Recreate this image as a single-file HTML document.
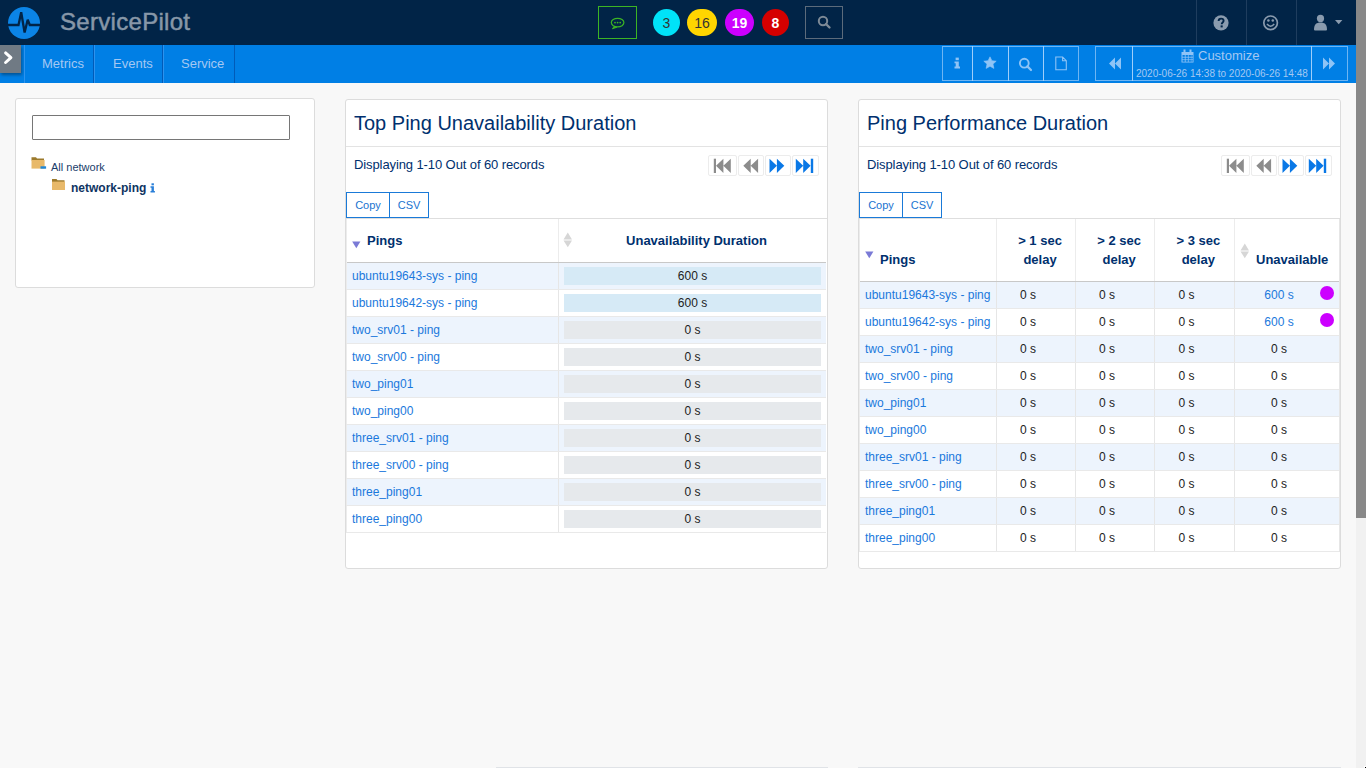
<!DOCTYPE html>
<html><head><meta charset="utf-8">
<style>
*{box-sizing:border-box;margin:0;padding:0}
html,body{width:1366px;height:768px;overflow:hidden;background:#f8f8f8;font-family:"Liberation Sans",sans-serif}
.abs{position:absolute}
#hdr{position:absolute;left:0;top:0;width:1356px;height:45px;background:#012447}
#nav{position:absolute;left:0;top:45px;width:1356px;height:38px;background:#007fe5}
#sb{position:absolute;left:1356px;top:0;width:10px;height:768px;background:#f1f1f1}
#sbt{position:absolute;left:1356px;top:0;width:10px;height:518px;background:#888}
.logo{left:60px;top:8px;font-size:24px;line-height:27px;color:#8797a8;letter-spacing:0.3px;-webkit-text-stroke:0.5px #8797a8}
.navsep{position:absolute;top:45px;width:1px;height:38px;background:#005bb8}
.navtxt{position:absolute;top:56px;font-size:13px;color:#a4c8f2}
.hsep{position:absolute;top:0;width:1px;height:45px;background:#1f3d5e}
.badge{top:9px;height:27px;border-radius:14px;text-align:center;font-size:14px;line-height:29px}
.nb{top:46px;height:35px;border:1px solid rgba(200,225,255,.55)}
.ptitle{top:112px;font-size:20px;line-height:23px;color:#00306e}
.pdisp{top:157px;letter-spacing:-0.1px;font-size:13px;line-height:15px;color:#00306e}
.pgb{top:155px;height:21px;border:1px solid #ececec;border-radius:2px}
.cpb{top:192px;height:26px;border:1px solid #1a7ad8;font-size:11px;line-height:24px;text-align:center;color:#1a73d0}
.th{font-size:13px;font-weight:bold;color:#00306e;line-height:16px}
.td{font-size:12px;line-height:26px;white-space:nowrap}
.lk{color:#1a78dc}
.panel{position:absolute;background:#fff;border:1px solid #dcdcdc;border-radius:3px}
</style></head><body>
<div id="hdr"></div>
<div id="nav"></div>
<div id="sb"></div><div id="sbt"></div>

<!-- logo -->
<svg class="abs" style="left:8px;top:7px" width="32" height="32" viewBox="0 0 32 32">
<circle cx="16" cy="16" r="16" fill="#0b84e6"/>
<polyline points="0,18 10.5,18 13.2,5.2 16.6,25.5 19.7,12.8 21.8,18 32,18" fill="none" stroke="#012447" stroke-width="2.3" stroke-linejoin="miter" stroke-miterlimit="3"/>
</svg>
<div class="abs logo">ServicePilot</div>

<!-- center header -->
<div class="abs" style="left:598px;top:6px;width:39px;height:33px;border:1px solid #3cb424"></div>
<svg class="abs" style="left:609px;top:16px" width="18" height="15" viewBox="0 0 18 15">
<ellipse cx="8.6" cy="6.6" rx="6.3" ry="4.3" fill="none" stroke="#3cb424" stroke-width="1.2"/>
<path d="M5.2 10.4 L3.4 12.8 L8 11.2" fill="#3cb424" stroke="#3cb424" stroke-width="0.9"/>
<circle cx="6" cy="6.6" r="0.9" fill="#3cb424"/><circle cx="8.6" cy="6.6" r="0.9" fill="#3cb424"/><circle cx="11.2" cy="6.6" r="0.9" fill="#3cb424"/>
</svg>
<div class="abs badge" style="left:653px;width:27px;background:#00e3f8;color:#333">3</div>
<div class="abs badge" style="left:687px;width:30px;background:#ffd500;color:#333">16</div>
<div class="abs badge" style="left:725px;width:29px;background:#cc00ff;color:#fff;font-weight:bold">19</div>
<div class="abs badge" style="left:762px;width:27px;background:#d50000;color:#fff;font-weight:bold">8</div>
<div class="abs" style="left:805px;top:6px;width:38px;height:33px;border:1px solid #5c6b7b"></div>
<svg class="abs" style="left:817px;top:15px" width="15" height="15" viewBox="0 0 15 15">
<circle cx="6" cy="6" r="4.2" fill="none" stroke="#7d8a97" stroke-width="2"/>
<line x1="9" y1="9" x2="12.5" y2="12.5" stroke="#7d8a97" stroke-width="2.4" stroke-linecap="round"/>
</svg>

<div class="hsep" style="left:1196px"></div>
<div class="hsep" style="left:1246px"></div>
<div class="hsep" style="left:1296px"></div>

<!-- right header icons -->
<svg class="abs" style="left:1213px;top:15px" width="16" height="16" viewBox="0 0 16 16">
<circle cx="8" cy="7.8" r="7.6" fill="#8a9bae"/>
<path d="M5.6 6.1 C5.6 4.4 6.8 3.6 8.1 3.6 C9.5 3.6 10.6 4.5 10.6 5.8 C10.6 7.5 8.7 7.6 8.7 9.2" fill="none" stroke="#012447" stroke-width="1.9"/>
<rect x="7.6" y="10.4" width="2.1" height="2" fill="#012447"/>
</svg>
<svg class="abs" style="left:1262px;top:15px" width="17" height="16" viewBox="0 0 17 16">
<circle cx="8.6" cy="7.8" r="6.8" fill="none" stroke="#8a9bae" stroke-width="1.7"/>
<circle cx="6.4" cy="5.5" r="1.25" fill="#8a9bae"/><circle cx="10.8" cy="5.5" r="1.25" fill="#8a9bae"/>
<path d="M5 9 Q8.6 13.4 12.2 9" fill="none" stroke="#8a9bae" stroke-width="1.6"/>
</svg>
<svg class="abs" style="left:1313px;top:14px" width="16" height="18" viewBox="0 0 16 18">
<circle cx="7.5" cy="4.4" r="3.6" fill="#8a9bae"/>
<path d="M1 15.5 C1 10.5 3.5 8.6 7.5 8.6 C11.5 8.6 14 10.5 14 15.5 Q14 16.6 13 16.6 L2 16.6 Q1 16.6 1 15.5Z" fill="#8a9bae"/>
</svg>
<svg class="abs" style="left:1335px;top:20px" width="8" height="5" viewBox="0 0 8 5"><path d="M0 0 L7.4 0 L3.7 4.2Z" fill="#8a9bae"/></svg>

<!-- nav -->
<div class="abs" style="left:0;top:45px;width:21px;height:28px;background:#707a84;box-shadow:1px 2px 3px rgba(0,0,0,.35)"></div>
<div class="navsep" style="left:24px;background:#2d93ee"></div>
<div class="navsep" style="left:93px"></div><div class="navsep" style="left:94px;background:#2d93ee"></div>
<div class="navsep" style="left:162px"></div><div class="navsep" style="left:163px;background:#2d93ee"></div>
<div class="navsep" style="left:234px"></div>
<div class="navtxt" style="left:42px">Metrics</div>
<div class="navtxt" style="left:113px">Events</div>
<div class="navtxt" style="left:181px">Service</div>

<svg class="abs" style="left:2px;top:50px" width="14" height="16" viewBox="0 0 14 16"><path d="M3.6 2.9 L8.9 7.7 L3.6 12.5" fill="none" stroke="#fff" stroke-width="3" stroke-linecap="round" stroke-linejoin="round"/></svg>
<!-- nav right group 1 -->
<div class="abs nb" style="left:942px;width:31px"></div>
<div class="abs nb" style="left:972px;width:37px"></div>
<div class="abs nb" style="left:1008px;width:36px"></div>
<div class="abs nb" style="left:1043px;width:36px"></div>
<svg class="abs" style="left:954px;top:57px" width="7" height="12" viewBox="0 0 7 12">
<rect x="1.6" y="0.6" width="3.2" height="2.6" fill="#8fc4f6"/>
<path d="M0.5 4.4 L4.8 4.4 L4.8 9.6 L6 9.6 L6 11.4 L0.5 11.4 L0.5 9.6 L1.7 9.6 L1.7 6.2 L0.5 6.2Z" fill="#8fc4f6"/>
</svg>
<svg class="abs" style="left:983px;top:56px" width="14" height="14" viewBox="0 0 14 14">
<path d="M7 0.8 L8.9 4.7 L13.2 5.2 L10 8.1 L10.9 12.4 L7 10.3 L3.1 12.4 L4 8.1 L0.8 5.2 L5.1 4.7Z" fill="#8fc4f6" stroke="#8fc4f6" stroke-width="0.6" stroke-linejoin="round"/>
</svg>
<svg class="abs" style="left:1018px;top:57px" width="15" height="15" viewBox="0 0 15 15">
<circle cx="6.3" cy="6.2" r="4.4" fill="none" stroke="#8fc4f6" stroke-width="1.9"/>
<line x1="9.4" y1="9.4" x2="13" y2="13" stroke="#8fc4f6" stroke-width="2.2" stroke-linecap="round"/>
</svg>
<svg class="abs" style="left:1054px;top:56px" width="14" height="15" viewBox="0 0 14 15">
<path d="M1.8 1 L8.6 1 L12.3 4.7 L12.3 13.8 L1.8 13.8Z M8.6 1 L8.6 4.7 L12.3 4.7" fill="none" stroke="#8fc4f6" stroke-width="1.1"/>
</svg>
<!-- nav right group 2 -->
<div class="abs nb" style="left:1095px;width:38px"></div>
<div class="abs nb" style="left:1132px;width:180px"></div>
<div class="abs nb" style="left:1311px;width:37px"></div>
<svg class="abs" style="left:1108px;top:57px" width="14" height="13" viewBox="0 0 14 13">
<path d="M7 0.5 L7 12.5 L1 6.5Z M13 0.5 L13 12.5 L7 6.5Z" fill="#8fc4f6"/>
</svg>
<svg class="abs" style="left:1322px;top:57px" width="14" height="13" viewBox="0 0 14 13">
<path d="M1 0.5 L1 12.5 L7 6.5Z M7 0.5 L7 12.5 L13 6.5Z" fill="#8fc4f6"/>
</svg>
<svg class="abs" style="left:1181px;top:49px" width="13" height="14" viewBox="0 0 13 14">
<path d="M0.5 3 L12.5 3 L12.5 13.5 L0.5 13.5Z" fill="#8fc4f6"/>
<rect x="2.5" y="0.5" width="2" height="3.5" fill="#8fc4f6"/><rect x="8.5" y="0.5" width="2" height="3.5" fill="#8fc4f6"/>
<g fill="#007fe5"><rect x="1.5" y="6" width="2.3" height="1.8"/><rect x="4.6" y="6" width="2.3" height="1.8"/><rect x="7.6" y="6" width="2.3" height="1.8"/><rect x="1.5" y="8.6" width="2.3" height="1.8"/><rect x="4.6" y="8.6" width="2.3" height="1.8"/><rect x="7.6" y="8.6" width="2.3" height="1.8"/><rect x="1.5" y="11.1" width="2.3" height="1.6"/><rect x="4.6" y="11.1" width="2.3" height="1.6"/><rect x="7.6" y="11.1" width="2.3" height="1.6"/><rect x="10.3" y="6" width="1.4" height="1.8"/><rect x="10.3" y="8.6" width="1.4" height="1.8"/><rect x="10.3" y="11.1" width="1.4" height="1.6"/></g>
</svg>
<div class="abs" style="left:1198px;top:48px;font-size:13px;color:#a4c8f2">Customize</div>
<div class="abs" style="left:1136px;top:68px;font-size:10px;color:#a4c8f2">2020-06-26 14:38 to 2020-06-26 14:48</div>

<!-- panels -->
<div class="panel" style="left:15px;top:98px;width:300px;height:190px"></div>
<div class="panel" style="left:345px;top:99px;width:483px;height:470px"></div>
<div class="panel" style="left:858px;top:99px;width:483px;height:470px"></div>

<!-- left panel content -->
<div class="abs" style="left:32px;top:115px;width:258px;height:25px;border:1px solid #767676;border-radius:1px;background:#fff"></div>
<svg class="abs" style="left:31px;top:156px" width="16" height="14" viewBox="0 0 16 14">
<path d="M0.5 1.3 L5 1.3 L6 2.4 L13 2.4 L13 4.5 L0.5 4.5Z" fill="#9c7a2c"/>
<path d="M0.5 4 L13.6 4 L13.6 12.6 L0.5 12.6Z" fill="#e8b96a"/>
<rect x="9.5" y="10.3" width="5.6" height="2.4" fill="#1f86d8"/>
</svg>
<div class="abs" style="left:51px;top:161px;font-size:11px;color:#1a3d6a">All network</div>
<svg class="abs" style="left:51px;top:178px" width="16" height="14" viewBox="0 0 16 14">
<path d="M1 1 L5.5 1 L6.5 2.2 L13.5 2.2 L13.5 4 L1 4Z" fill="#9c7a2c"/>
<path d="M1 3.6 L14 3.6 L14 12 L1 12Z" fill="#e8b96a"/>
</svg>
<div class="abs" style="left:71px;top:181px;font-size:12px;font-weight:bold;color:#0e3462">network-ping</div>
<svg class="abs" style="left:150px;top:183px" width="6" height="10" viewBox="0 0 6 10">
<rect x="1.5" y="0.3" width="2.4" height="2" fill="#2a7fd8"/>
<path d="M0.5 3.3 L3.9 3.3 L3.9 8 L4.9 8 L4.9 9.6 L0.5 9.6 L0.5 8 L1.5 8 L1.5 4.8 L0.5 4.8Z" fill="#2a7fd8"/>
</svg>
<div class="abs" style="left:496px;top:767px;width:332px;height:1px;background:#e0e3e7"></div>
<div class="abs" style="left:858px;top:767px;width:483px;height:1px;background:#e0e3e7"></div>
<div class="abs" style="left:1364px;top:766px;width:2px;height:2px;background:#fff"></div><div class="abs" style="left:1365px;top:767px;width:1px;height:1px;background:#000"></div>
<!-- TABLES -->
<div class="abs ptitle" style="left:354px">Top Ping Unavailability Duration</div>
<div class="abs" style="left:346px;top:146px;width:481px;height:1px;background:#e3e3e3"></div>
<div class="abs pdisp" style="left:354px">Displaying 1-10 Out of 60 records</div>
<div class="abs pgb" style="left:708px;width:29px"></div>
<div class="abs pgb" style="left:738px;width:26px"></div>
<div class="abs pgb" style="left:765px;width:26px"></div>
<div class="abs pgb" style="left:792px;width:27px"></div>
<svg class="abs" style="left:713px;top:158px" width="20" height="16" viewBox="0 0 20 16"><rect x="0.8" y="0.7" width="2.2" height="14.3" fill="#8c8c8c"/><path d="M3 7.85 L10.4 0.7 L10.4 15 Z M10.4 7.85 L17.8 0.7 L17.8 15Z" fill="#8c8c8c"/></svg>
<svg class="abs" style="left:743px;top:158px" width="16" height="16" viewBox="0 0 16 16"><path d="M0.3 7.85 L7.7 0.7 L7.7 15 Z M7.7 7.85 L15.1 0.7 L15.1 15Z" fill="#8c8c8c"/></svg>
<svg class="abs" style="left:769px;top:158px" width="16" height="16" viewBox="0 0 16 16"><path d="M0.5 0.7 L7.9 7.85 L0.5 15 Z M7.9 0.7 L15.3 7.85 L7.9 15Z" fill="#0a78e6"/></svg>
<svg class="abs" style="left:795px;top:158px" width="20" height="16" viewBox="0 0 20 16"><path d="M0.8 0.7 L8.2 7.85 L0.8 15 Z M8.2 0.7 L15.6 7.85 L8.2 15Z" fill="#0a78e6"/><rect x="15.8" y="0.7" width="2.4" height="14.3" fill="#0a78e6"/></svg>
<div class="abs cpb" style="left:346px;width:44px">Copy</div>
<div class="abs cpb" style="left:389px;width:40px">CSV</div>
<div class="abs" style="left:346px;top:218px;width:481px;height:1px;background:#dedede"></div>
<svg class="abs" style="left:352px;top:241px" width="9" height="8" viewBox="0 0 9 8"><path d="M0.2 0.5 L8.4 0.5 L4.3 7.3Z" fill="#7a7ad6"/></svg>
<div class="abs th" style="left:367px;top:233px">Pings</div>
<svg class="abs" style="left:563px;top:232px" width="10" height="16" viewBox="0 0 10 16"><path d="M0.5 7.4 L4.8 0.5 L9 7.4Z M0.5 8.4 L9 8.4 L4.8 15.2Z" fill="#d6d6d6"/></svg>
<div class="abs th" style="left:559px;top:233px;width:275px;text-align:center">Unavailability Duration</div>
<div class="abs" style="left:558px;top:219px;width:1px;height:44px;background:#ececec"></div>
<div class="abs" style="left:347px;top:262px;width:479px;height:1px;background:#c8c8c8"></div>
<div class="abs" style="left:346px;top:219px;width:1px;height:314px;background:#ececec"></div>
<div class="abs" style="left:347px;top:263px;width:479px;height:26px;background:#edf4fd"></div>
<div class="abs" style="left:346px;top:289px;width:480px;height:1px;background:#e9e9e9"></div>
<div class="abs" style="left:558px;top:263px;width:1px;height:26px;background:#e6e6e6"></div>
<div class="abs td lk" style="left:352px;top:263px">ubuntu19643-sys - ping</div>
<div class="abs td" style="left:564px;top:267px;width:257px;height:18px;line-height:18px;background:#d6eaf6;text-align:center;color:#222">600 s</div>
<div class="abs" style="left:347px;top:290px;width:479px;height:26px;background:#fff"></div>
<div class="abs" style="left:346px;top:316px;width:480px;height:1px;background:#e9e9e9"></div>
<div class="abs" style="left:558px;top:290px;width:1px;height:26px;background:#e6e6e6"></div>
<div class="abs td lk" style="left:352px;top:290px">ubuntu19642-sys - ping</div>
<div class="abs td" style="left:564px;top:294px;width:257px;height:18px;line-height:18px;background:#d6eaf6;text-align:center;color:#222">600 s</div>
<div class="abs" style="left:347px;top:317px;width:479px;height:26px;background:#edf4fd"></div>
<div class="abs" style="left:346px;top:343px;width:480px;height:1px;background:#e9e9e9"></div>
<div class="abs" style="left:558px;top:317px;width:1px;height:26px;background:#e6e6e6"></div>
<div class="abs td lk" style="left:352px;top:317px">two_srv01 - ping</div>
<div class="abs td" style="left:564px;top:321px;width:257px;height:18px;line-height:18px;background:#e6e9ec;text-align:center;color:#222">0 s</div>
<div class="abs" style="left:347px;top:344px;width:479px;height:26px;background:#fff"></div>
<div class="abs" style="left:346px;top:370px;width:480px;height:1px;background:#e9e9e9"></div>
<div class="abs" style="left:558px;top:344px;width:1px;height:26px;background:#e6e6e6"></div>
<div class="abs td lk" style="left:352px;top:344px">two_srv00 - ping</div>
<div class="abs td" style="left:564px;top:348px;width:257px;height:18px;line-height:18px;background:#e6e9ec;text-align:center;color:#222">0 s</div>
<div class="abs" style="left:347px;top:371px;width:479px;height:26px;background:#edf4fd"></div>
<div class="abs" style="left:346px;top:397px;width:480px;height:1px;background:#e9e9e9"></div>
<div class="abs" style="left:558px;top:371px;width:1px;height:26px;background:#e6e6e6"></div>
<div class="abs td lk" style="left:352px;top:371px">two_ping01</div>
<div class="abs td" style="left:564px;top:375px;width:257px;height:18px;line-height:18px;background:#e6e9ec;text-align:center;color:#222">0 s</div>
<div class="abs" style="left:347px;top:398px;width:479px;height:26px;background:#fff"></div>
<div class="abs" style="left:346px;top:424px;width:480px;height:1px;background:#e9e9e9"></div>
<div class="abs" style="left:558px;top:398px;width:1px;height:26px;background:#e6e6e6"></div>
<div class="abs td lk" style="left:352px;top:398px">two_ping00</div>
<div class="abs td" style="left:564px;top:402px;width:257px;height:18px;line-height:18px;background:#e6e9ec;text-align:center;color:#222">0 s</div>
<div class="abs" style="left:347px;top:425px;width:479px;height:26px;background:#edf4fd"></div>
<div class="abs" style="left:346px;top:451px;width:480px;height:1px;background:#e9e9e9"></div>
<div class="abs" style="left:558px;top:425px;width:1px;height:26px;background:#e6e6e6"></div>
<div class="abs td lk" style="left:352px;top:425px">three_srv01 - ping</div>
<div class="abs td" style="left:564px;top:429px;width:257px;height:18px;line-height:18px;background:#e6e9ec;text-align:center;color:#222">0 s</div>
<div class="abs" style="left:347px;top:452px;width:479px;height:26px;background:#fff"></div>
<div class="abs" style="left:346px;top:478px;width:480px;height:1px;background:#e9e9e9"></div>
<div class="abs" style="left:558px;top:452px;width:1px;height:26px;background:#e6e6e6"></div>
<div class="abs td lk" style="left:352px;top:452px">three_srv00 - ping</div>
<div class="abs td" style="left:564px;top:456px;width:257px;height:18px;line-height:18px;background:#e6e9ec;text-align:center;color:#222">0 s</div>
<div class="abs" style="left:347px;top:479px;width:479px;height:26px;background:#edf4fd"></div>
<div class="abs" style="left:346px;top:505px;width:480px;height:1px;background:#e9e9e9"></div>
<div class="abs" style="left:558px;top:479px;width:1px;height:26px;background:#e6e6e6"></div>
<div class="abs td lk" style="left:352px;top:479px">three_ping01</div>
<div class="abs td" style="left:564px;top:483px;width:257px;height:18px;line-height:18px;background:#e6e9ec;text-align:center;color:#222">0 s</div>
<div class="abs" style="left:347px;top:506px;width:479px;height:26px;background:#fff"></div>
<div class="abs" style="left:346px;top:532px;width:480px;height:1px;background:#e9e9e9"></div>
<div class="abs" style="left:558px;top:506px;width:1px;height:26px;background:#e6e6e6"></div>
<div class="abs td lk" style="left:352px;top:506px">three_ping00</div>
<div class="abs td" style="left:564px;top:510px;width:257px;height:18px;line-height:18px;background:#e6e9ec;text-align:center;color:#222">0 s</div>
<div class="abs ptitle" style="left:867px">Ping Performance Duration</div>
<div class="abs" style="left:859px;top:146px;width:481px;height:1px;background:#e3e3e3"></div>
<div class="abs pdisp" style="left:867px">Displaying 1-10 Out of 60 records</div>
<div class="abs pgb" style="left:1221px;width:29px"></div>
<div class="abs pgb" style="left:1251px;width:26px"></div>
<div class="abs pgb" style="left:1278px;width:26px"></div>
<div class="abs pgb" style="left:1305px;width:27px"></div>
<svg class="abs" style="left:1226px;top:158px" width="20" height="16" viewBox="0 0 20 16"><rect x="0.8" y="0.7" width="2.2" height="14.3" fill="#8c8c8c"/><path d="M3 7.85 L10.4 0.7 L10.4 15 Z M10.4 7.85 L17.8 0.7 L17.8 15Z" fill="#8c8c8c"/></svg>
<svg class="abs" style="left:1256px;top:158px" width="16" height="16" viewBox="0 0 16 16"><path d="M0.3 7.85 L7.7 0.7 L7.7 15 Z M7.7 7.85 L15.1 0.7 L15.1 15Z" fill="#8c8c8c"/></svg>
<svg class="abs" style="left:1282px;top:158px" width="16" height="16" viewBox="0 0 16 16"><path d="M0.5 0.7 L7.9 7.85 L0.5 15 Z M7.9 0.7 L15.3 7.85 L7.9 15Z" fill="#0a78e6"/></svg>
<svg class="abs" style="left:1308px;top:158px" width="20" height="16" viewBox="0 0 20 16"><path d="M0.8 0.7 L8.2 7.85 L0.8 15 Z M8.2 0.7 L15.6 7.85 L8.2 15Z" fill="#0a78e6"/><rect x="15.8" y="0.7" width="2.4" height="14.3" fill="#0a78e6"/></svg>
<div class="abs cpb" style="left:859px;width:44px">Copy</div>
<div class="abs cpb" style="left:902px;width:40px">CSV</div>
<div class="abs" style="left:859px;top:218px;width:481px;height:1px;background:#dedede"></div>
<svg class="abs" style="left:865px;top:251px" width="9" height="8" viewBox="0 0 9 8"><path d="M0.2 0.5 L8.4 0.5 L4.3 7.3Z" fill="#7a7ad6"/></svg>
<div class="abs th" style="left:880px;top:252px">Pings</div>
<div class="abs th" style="left:1000px;top:231px;width:80px;text-align:center;line-height:19px">&gt; 1 sec<br>delay</div>
<div class="abs th" style="left:1079.2px;top:231px;width:80px;text-align:center;line-height:19px">&gt; 2 sec<br>delay</div>
<div class="abs th" style="left:1158.3px;top:231px;width:80px;text-align:center;line-height:19px">&gt; 3 sec<br>delay</div>
<svg class="abs" style="left:1240px;top:243px" width="10" height="16" viewBox="0 0 10 16"><path d="M0.5 7.4 L4.8 0.5 L9 7.4Z M0.5 8.4 L9 8.4 L4.8 15.2Z" fill="#d6d6d6"/></svg>
<div class="abs th" style="left:1256px;top:252px">Unavailable</div>
<div class="abs" style="left:996px;top:219px;width:1px;height:63px;background:#ececec"></div>
<div class="abs" style="left:1075px;top:219px;width:1px;height:63px;background:#ececec"></div>
<div class="abs" style="left:1154px;top:219px;width:1px;height:63px;background:#ececec"></div>
<div class="abs" style="left:1234px;top:219px;width:1px;height:63px;background:#ececec"></div>
<div class="abs" style="left:860px;top:281px;width:479px;height:1px;background:#c8c8c8"></div>
<div class="abs" style="left:859px;top:219px;width:1px;height:333px;background:#ececec"></div>
<div class="abs" style="left:1339px;top:219px;width:1px;height:333px;background:#e6e6e6"></div>
<div class="abs" style="left:860px;top:282px;width:479px;height:26px;background:#edf4fd"></div>
<div class="abs" style="left:859px;top:308px;width:480px;height:1px;background:#e9e9e9"></div>
<div class="abs" style="left:996px;top:282px;width:1px;height:26px;background:#e6e6e6"></div>
<div class="abs" style="left:1075px;top:282px;width:1px;height:26px;background:#e6e6e6"></div>
<div class="abs" style="left:1154px;top:282px;width:1px;height:26px;background:#e6e6e6"></div>
<div class="abs" style="left:1234px;top:282px;width:1px;height:26px;background:#e6e6e6"></div>
<div class="abs td lk" style="left:865px;top:282px">ubuntu19643-sys - ping</div>
<div class="abs td" style="left:998px;top:282px;width:60px;text-align:center;color:#222">0 s</div>
<div class="abs td" style="left:1077px;top:282px;width:60px;text-align:center;color:#222">0 s</div>
<div class="abs td" style="left:1156.5px;top:282px;width:60px;text-align:center;color:#222">0 s</div>
<div class="abs td lk" style="left:1249px;top:282px;width:60px;text-align:center">600 s</div>
<div class="abs" style="left:1320px;top:286px;width:14px;height:14px;border-radius:7px;background:#cc00ff"></div>
<div class="abs" style="left:860px;top:309px;width:479px;height:26px;background:#fff"></div>
<div class="abs" style="left:859px;top:335px;width:480px;height:1px;background:#e9e9e9"></div>
<div class="abs" style="left:996px;top:309px;width:1px;height:26px;background:#e6e6e6"></div>
<div class="abs" style="left:1075px;top:309px;width:1px;height:26px;background:#e6e6e6"></div>
<div class="abs" style="left:1154px;top:309px;width:1px;height:26px;background:#e6e6e6"></div>
<div class="abs" style="left:1234px;top:309px;width:1px;height:26px;background:#e6e6e6"></div>
<div class="abs td lk" style="left:865px;top:309px">ubuntu19642-sys - ping</div>
<div class="abs td" style="left:998px;top:309px;width:60px;text-align:center;color:#222">0 s</div>
<div class="abs td" style="left:1077px;top:309px;width:60px;text-align:center;color:#222">0 s</div>
<div class="abs td" style="left:1156.5px;top:309px;width:60px;text-align:center;color:#222">0 s</div>
<div class="abs td lk" style="left:1249px;top:309px;width:60px;text-align:center">600 s</div>
<div class="abs" style="left:1320px;top:313px;width:14px;height:14px;border-radius:7px;background:#cc00ff"></div>
<div class="abs" style="left:860px;top:336px;width:479px;height:26px;background:#edf4fd"></div>
<div class="abs" style="left:859px;top:362px;width:480px;height:1px;background:#e9e9e9"></div>
<div class="abs" style="left:996px;top:336px;width:1px;height:26px;background:#e6e6e6"></div>
<div class="abs" style="left:1075px;top:336px;width:1px;height:26px;background:#e6e6e6"></div>
<div class="abs" style="left:1154px;top:336px;width:1px;height:26px;background:#e6e6e6"></div>
<div class="abs" style="left:1234px;top:336px;width:1px;height:26px;background:#e6e6e6"></div>
<div class="abs td lk" style="left:865px;top:336px">two_srv01 - ping</div>
<div class="abs td" style="left:998px;top:336px;width:60px;text-align:center;color:#222">0 s</div>
<div class="abs td" style="left:1077px;top:336px;width:60px;text-align:center;color:#222">0 s</div>
<div class="abs td" style="left:1156.5px;top:336px;width:60px;text-align:center;color:#222">0 s</div>
<div class="abs td" style="left:1249px;top:336px;width:60px;text-align:center;color:#222">0 s</div>
<div class="abs" style="left:860px;top:363px;width:479px;height:26px;background:#fff"></div>
<div class="abs" style="left:859px;top:389px;width:480px;height:1px;background:#e9e9e9"></div>
<div class="abs" style="left:996px;top:363px;width:1px;height:26px;background:#e6e6e6"></div>
<div class="abs" style="left:1075px;top:363px;width:1px;height:26px;background:#e6e6e6"></div>
<div class="abs" style="left:1154px;top:363px;width:1px;height:26px;background:#e6e6e6"></div>
<div class="abs" style="left:1234px;top:363px;width:1px;height:26px;background:#e6e6e6"></div>
<div class="abs td lk" style="left:865px;top:363px">two_srv00 - ping</div>
<div class="abs td" style="left:998px;top:363px;width:60px;text-align:center;color:#222">0 s</div>
<div class="abs td" style="left:1077px;top:363px;width:60px;text-align:center;color:#222">0 s</div>
<div class="abs td" style="left:1156.5px;top:363px;width:60px;text-align:center;color:#222">0 s</div>
<div class="abs td" style="left:1249px;top:363px;width:60px;text-align:center;color:#222">0 s</div>
<div class="abs" style="left:860px;top:390px;width:479px;height:26px;background:#edf4fd"></div>
<div class="abs" style="left:859px;top:416px;width:480px;height:1px;background:#e9e9e9"></div>
<div class="abs" style="left:996px;top:390px;width:1px;height:26px;background:#e6e6e6"></div>
<div class="abs" style="left:1075px;top:390px;width:1px;height:26px;background:#e6e6e6"></div>
<div class="abs" style="left:1154px;top:390px;width:1px;height:26px;background:#e6e6e6"></div>
<div class="abs" style="left:1234px;top:390px;width:1px;height:26px;background:#e6e6e6"></div>
<div class="abs td lk" style="left:865px;top:390px">two_ping01</div>
<div class="abs td" style="left:998px;top:390px;width:60px;text-align:center;color:#222">0 s</div>
<div class="abs td" style="left:1077px;top:390px;width:60px;text-align:center;color:#222">0 s</div>
<div class="abs td" style="left:1156.5px;top:390px;width:60px;text-align:center;color:#222">0 s</div>
<div class="abs td" style="left:1249px;top:390px;width:60px;text-align:center;color:#222">0 s</div>
<div class="abs" style="left:860px;top:417px;width:479px;height:26px;background:#fff"></div>
<div class="abs" style="left:859px;top:443px;width:480px;height:1px;background:#e9e9e9"></div>
<div class="abs" style="left:996px;top:417px;width:1px;height:26px;background:#e6e6e6"></div>
<div class="abs" style="left:1075px;top:417px;width:1px;height:26px;background:#e6e6e6"></div>
<div class="abs" style="left:1154px;top:417px;width:1px;height:26px;background:#e6e6e6"></div>
<div class="abs" style="left:1234px;top:417px;width:1px;height:26px;background:#e6e6e6"></div>
<div class="abs td lk" style="left:865px;top:417px">two_ping00</div>
<div class="abs td" style="left:998px;top:417px;width:60px;text-align:center;color:#222">0 s</div>
<div class="abs td" style="left:1077px;top:417px;width:60px;text-align:center;color:#222">0 s</div>
<div class="abs td" style="left:1156.5px;top:417px;width:60px;text-align:center;color:#222">0 s</div>
<div class="abs td" style="left:1249px;top:417px;width:60px;text-align:center;color:#222">0 s</div>
<div class="abs" style="left:860px;top:444px;width:479px;height:26px;background:#edf4fd"></div>
<div class="abs" style="left:859px;top:470px;width:480px;height:1px;background:#e9e9e9"></div>
<div class="abs" style="left:996px;top:444px;width:1px;height:26px;background:#e6e6e6"></div>
<div class="abs" style="left:1075px;top:444px;width:1px;height:26px;background:#e6e6e6"></div>
<div class="abs" style="left:1154px;top:444px;width:1px;height:26px;background:#e6e6e6"></div>
<div class="abs" style="left:1234px;top:444px;width:1px;height:26px;background:#e6e6e6"></div>
<div class="abs td lk" style="left:865px;top:444px">three_srv01 - ping</div>
<div class="abs td" style="left:998px;top:444px;width:60px;text-align:center;color:#222">0 s</div>
<div class="abs td" style="left:1077px;top:444px;width:60px;text-align:center;color:#222">0 s</div>
<div class="abs td" style="left:1156.5px;top:444px;width:60px;text-align:center;color:#222">0 s</div>
<div class="abs td" style="left:1249px;top:444px;width:60px;text-align:center;color:#222">0 s</div>
<div class="abs" style="left:860px;top:471px;width:479px;height:26px;background:#fff"></div>
<div class="abs" style="left:859px;top:497px;width:480px;height:1px;background:#e9e9e9"></div>
<div class="abs" style="left:996px;top:471px;width:1px;height:26px;background:#e6e6e6"></div>
<div class="abs" style="left:1075px;top:471px;width:1px;height:26px;background:#e6e6e6"></div>
<div class="abs" style="left:1154px;top:471px;width:1px;height:26px;background:#e6e6e6"></div>
<div class="abs" style="left:1234px;top:471px;width:1px;height:26px;background:#e6e6e6"></div>
<div class="abs td lk" style="left:865px;top:471px">three_srv00 - ping</div>
<div class="abs td" style="left:998px;top:471px;width:60px;text-align:center;color:#222">0 s</div>
<div class="abs td" style="left:1077px;top:471px;width:60px;text-align:center;color:#222">0 s</div>
<div class="abs td" style="left:1156.5px;top:471px;width:60px;text-align:center;color:#222">0 s</div>
<div class="abs td" style="left:1249px;top:471px;width:60px;text-align:center;color:#222">0 s</div>
<div class="abs" style="left:860px;top:498px;width:479px;height:26px;background:#edf4fd"></div>
<div class="abs" style="left:859px;top:524px;width:480px;height:1px;background:#e9e9e9"></div>
<div class="abs" style="left:996px;top:498px;width:1px;height:26px;background:#e6e6e6"></div>
<div class="abs" style="left:1075px;top:498px;width:1px;height:26px;background:#e6e6e6"></div>
<div class="abs" style="left:1154px;top:498px;width:1px;height:26px;background:#e6e6e6"></div>
<div class="abs" style="left:1234px;top:498px;width:1px;height:26px;background:#e6e6e6"></div>
<div class="abs td lk" style="left:865px;top:498px">three_ping01</div>
<div class="abs td" style="left:998px;top:498px;width:60px;text-align:center;color:#222">0 s</div>
<div class="abs td" style="left:1077px;top:498px;width:60px;text-align:center;color:#222">0 s</div>
<div class="abs td" style="left:1156.5px;top:498px;width:60px;text-align:center;color:#222">0 s</div>
<div class="abs td" style="left:1249px;top:498px;width:60px;text-align:center;color:#222">0 s</div>
<div class="abs" style="left:860px;top:525px;width:479px;height:26px;background:#fff"></div>
<div class="abs" style="left:859px;top:551px;width:480px;height:1px;background:#e9e9e9"></div>
<div class="abs" style="left:996px;top:525px;width:1px;height:26px;background:#e6e6e6"></div>
<div class="abs" style="left:1075px;top:525px;width:1px;height:26px;background:#e6e6e6"></div>
<div class="abs" style="left:1154px;top:525px;width:1px;height:26px;background:#e6e6e6"></div>
<div class="abs" style="left:1234px;top:525px;width:1px;height:26px;background:#e6e6e6"></div>
<div class="abs td lk" style="left:865px;top:525px">three_ping00</div>
<div class="abs td" style="left:998px;top:525px;width:60px;text-align:center;color:#222">0 s</div>
<div class="abs td" style="left:1077px;top:525px;width:60px;text-align:center;color:#222">0 s</div>
<div class="abs td" style="left:1156.5px;top:525px;width:60px;text-align:center;color:#222">0 s</div>
<div class="abs td" style="left:1249px;top:525px;width:60px;text-align:center;color:#222">0 s</div>
<!-- /TABLES -->
</body></html>
